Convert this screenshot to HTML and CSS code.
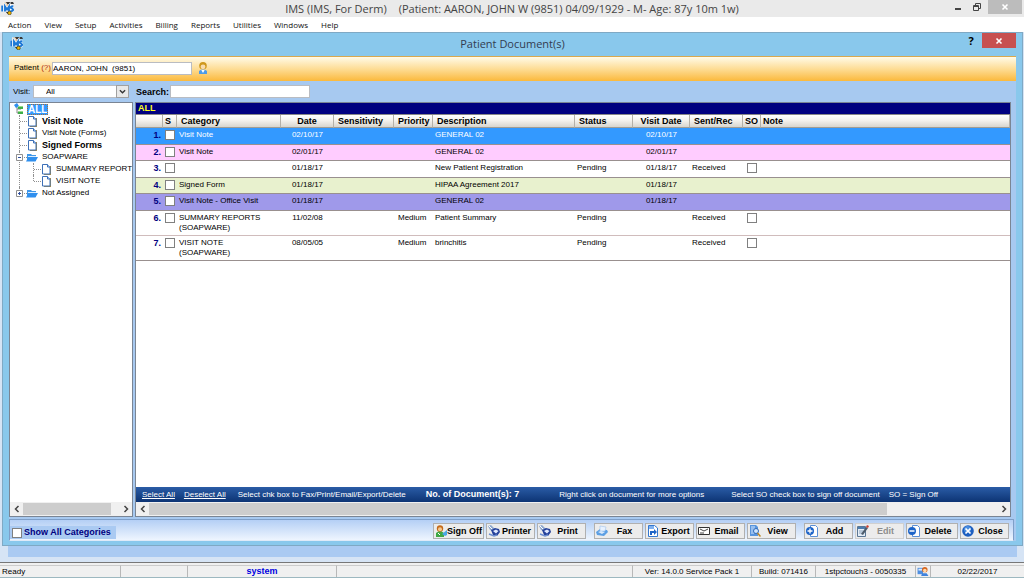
FILE: index.html
```html
<!DOCTYPE html>
<html lang="en">
<head>
<meta charset="utf-8">
<title>IMS - Patient Document(s)</title>
<link rel="stylesheet" href="styles.css">
</head>
<body>
<svg class="defs" aria-hidden="true">
  <symbol id="i-ims" viewBox="0 0 13 13">
    <path d="M2 1l4-1 2 3-4 2z" fill="#d9b48c"/><path d="M5 0h7l1 2H6z" fill="#3a3a3a"/>
    <circle cx="4" cy="2.500" r="2" fill="#ecdcc8"/>
    <path d="M1.200 3.500v6M4 9.500V4.500l2 3 2-3v5M12.300 4.500c-3-1-3 1.500-1.200 2.200s1.200 2.800-1.800 2.300" fill="none" stroke="#fff" stroke-width="3"/>
    <path d="M1.200 3.500v6M4 9.500V4.500l2 3 2-3v5M12.300 4.500c-3-1-3 1.500-1.200 2.200s1.200 2.800-1.800 2.300" fill="none" stroke="#1d78d6" stroke-width="1.900"/>
    <path d="M5.500 10l2 1.500" stroke="#222" stroke-width="1.200"/><circle cx="8.500" cy="11" r="1.800" fill="#f2b600" stroke="#332a00" stroke-width=".6"/>
  </symbol>
  <symbol id="i-page" viewBox="0 0 9 11">
    <path d="M2 2h7v9H2z" fill="#a08a50"/><path d="M.5.500h5l2.500 2.500v7H.5z" fill="#fff" stroke="#3d70b8"/><path d="M5.500.500V3H8" fill="#cfe2fa" stroke="#3d70b8"/>
  </symbol>
  <symbol id="i-folder" viewBox="0 0 12 9">
    <path d="M1 1h4l1 1h4v6H1z" fill="#3f97e8"/><path d="M0 8.500L2.500 4H12L9.500 8.500z" fill="#2f8fee"/><path d="M2 3.500h8" stroke="#d8ecff"/>
  </symbol>
  <symbol id="i-root" viewBox="0 0 10 12">
    <path d="M3 4v6h4M3 6h4" fill="none" stroke="#888"/><path d="M0 2l3-2 2 3-3 2z" fill="#2f8fee"/><path d="M4 3h5v3H4zM4 8h5v3H4z" fill="#3fae49"/><path d="M4 3h5v1H4zM4 8h5v1H4z" fill="#97dc8d"/>
  </symbol>
  <symbol id="i-person" viewBox="0 0 10 12">
    <path d="M1 12V9l3-2h2l3 2v3z" fill="#4d9be8"/><path d="M3 7.500h4L5 11z" fill="#fff"/><circle cx="5" cy="3.800" r="3.800" fill="#cf981c"/><circle cx="5" cy="4.800" r="2.400" fill="#f8dcae"/>
  </symbol>
  <symbol id="i-sign" viewBox="0 0 12 12">
    <path d="M1 12V8l3-2h2l3 2v4z" fill="#3fa845"/><circle cx="5" cy="3.500" r="3.200" fill="#c56a1a"/><circle cx="5" cy="4.300" r="2" fill="#f5c88e"/><path d="M7 9l5-4v5l-2 1z" fill="#48a7e6"/><path d="M3 8l2 2" stroke="#fff"/>
  </symbol>
  <symbol id="i-printer" viewBox="0 0 12 12">
    <path d="M0 1l3-1 4 4-2 2-3-1z" fill="#8fa9cf"/><path d="M1 1l4 4" stroke="#fff"/><path d="M3 5l4-2 4 1 1 3-3 4-4-1z" fill="#24409a"/><path d="M5 6l3-1.500L10.500 6 8 8.500z" fill="#dfe8ff"/><path d="M1 9l5 2 3-1" fill="none" stroke="#6d8ed0" stroke-width="1.500"/>
  </symbol>
  <symbol id="i-fax" viewBox="0 0 12 12">
    <path d="M0 7l4-3 7 1 1 2-4 4-7-1z" fill="#5b9fe4"/><path d="M4 1l6 1-1 4-5 0z" fill="#e8f2ff" stroke="#9fc2ec" stroke-width=".6"/><path d="M2 7l3-1 4 1-3 2z" fill="#d7e8fb"/>
  </symbol>
  <symbol id="i-export" viewBox="0 0 12 12">
    <path d="M1.500.500h6L10.500 3v8.500h-9z" fill="#fff" stroke="#3478d0"/><path d="M2 1h5v3H2z" fill="#80b1ef"/><path d="M3 10V6h4V4l3 3-3 3V8H5v2z" fill="#1f65c7"/>
  </symbol>
  <symbol id="i-mail" viewBox="0 0 12 12">
    <path d="M.5 2.500h11v7H.5z" fill="#fff" stroke="#333"/><path d="M2 4l4 2 4-2M2 8h4" fill="none" stroke="#444"/>
  </symbol>
  <symbol id="i-view" viewBox="0 0 12 12">
    <path d="M1 0h6l2 2v9H1z" fill="#5795de"/><path d="M2 2h4M2 4h5M2 6h3M2 8h3" stroke="#d9e9ff"/><circle cx="7" cy="6" r="2.500" fill="#cfe6ff" stroke="#2f68b5"/><path d="M8.500 8l3 3.500" stroke="#b98525" stroke-width="1.500"/>
  </symbol>
  <symbol id="i-add" viewBox="0 0 12 12">
    <path d="M4.500.500h5l2 2v9h-7z" fill="#fff" stroke="#5b8fd6"/><circle cx="4" cy="6" r="4" fill="#1d64c8"/><path d="M4 3.500v5M1.500 6h5" stroke="#fff" stroke-width="1.300"/>
  </symbol>
  <symbol id="i-delete" viewBox="0 0 12 12">
    <path d="M4.500.500h5l2 2v9h-7z" fill="#fff" stroke="#5b8fd6"/><circle cx="4" cy="6" r="4" fill="#1d64c8"/><path d="M1.500 6h5" stroke="#fff" stroke-width="1.500"/>
  </symbol>
  <symbol id="i-edit" viewBox="0 0 12 12">
    <path d="M.5 1.500h8v10h-8z" fill="#e5eef8" stroke="#5a7795"/><path d="M1 2h7v2H1z" fill="#4e7dae"/><path d="M2 6h4M2 8h3" stroke="#8aa2ba"/><path d="M4 9l5-7 2 1-5 7z" fill="#4d5c6b"/><path d="M9 2l1-2 2 1-1 2z" fill="#d04030"/>
  </symbol>
  <symbol id="i-close" viewBox="0 0 12 12">
    <circle cx="6" cy="6" r="5.800" fill="#1e5fc0"/><circle cx="5.500" cy="4.500" r="3.500" fill="#4b8ee0"/><path d="M3.500 3.500l5 5M8.500 3.500l-5 5" stroke="#fff" stroke-width="1.700"/>
  </symbol>
  <symbol id="i-users" viewBox="0 0 12 11">
    <path d="M0 2h6v7H0z" fill="#4f8fe0"/><path d="M1 3h4v2H1z" fill="#dcebff"/><circle cx="8" cy="4" r="3" fill="#d8641c"/><circle cx="8" cy="5" r="2" fill="#ffd9a8"/><path d="M4 11l1-3h5l2 3z" fill="#3f83dc"/>
  </symbol>
  <symbol id="i-x" viewBox="0 0 8 8"><path d="M1.500 1.500l5 5M6.500 1.500l-5 5" stroke="currentColor" stroke-width="1.600"/></symbol>
  <symbol id="i-left" viewBox="0 0 8 8"><path d="M5.500 1l-3 3 3 3" fill="none" stroke="currentColor" stroke-width="1.500"/></symbol>
  <symbol id="i-right" viewBox="0 0 8 8"><path d="M2.500 1l3 3-3 3" fill="none" stroke="currentColor" stroke-width="1.500"/></symbol>
  <symbol id="i-down" viewBox="0 0 8 8"><path d="M1 2.500l3 3 3-3" fill="none" stroke="currentColor" stroke-width="1.500"/></symbol>
</svg>

<header class="titlebar">
  <svg class="app-icon"><use href="#i-ims"/></svg>
  <h1 class="app-title"><span>IMS (IMS, For Derm)</span><span>(Patient: AARON, JOHN W (9851) 04/09/1929 - M- Age: 87y 10m 1w)</span></h1>
  <div class="win-controls">
    <button class="win-btn" aria-label="Minimize"><svg viewBox="0 0 8 8"><path d="M1 6h6" stroke="#333" stroke-width="1.800"/></svg></button>
    <button class="win-btn" aria-label="Restore"><svg viewBox="0 0 8 8"><path d="M.5 2.500h5v5h-5zM2.500 2V.500h5v5H6M.5 3.500h5" fill="none" stroke="#444"/></svg></button>
    <button class="win-btn win-close" aria-label="Close window"><svg><use href="#i-x"/></svg></button>
  </div>
</header>
<nav class="menubar">
  <button>Action</button><button>View</button><button>Setup</button><button>Activities</button><button>Billing</button><button>Reports</button><button>Utilities</button><button>Windows</button><button>Help</button>
</nav>

<main class="workspace">
  <section class="dialog">
    <header class="dialog-title">
      <svg class="app-icon"><use href="#i-ims"/></svg>
      <h2>Patient Document(s)</h2>
      <div class="dialog-controls">
        <button class="help-btn" aria-label="Help">?</button>
        <button class="close-btn" aria-label="Close dialog"><svg><use href="#i-x"/></svg></button>
      </div>
    </header>
    <div class="dialog-body">
      <div class="patient-bar">
        <label for="patient">Patient <span class="hint">(?)</span></label>
        <input id="patient" class="field" type="text" value="AARON, JOHN  (9851)">
        <svg class="person"><use href="#i-person"/></svg>
      </div>
      <div class="filter-bar">
        <label class="visit-label" for="visit">Visit:</label>
        <div class="select-wrap">
          <select id="visit"><option>All</option></select>
          <svg class="select-arrow"><use href="#i-down"/></svg>
        </div>
        <label class="bold" for="search">Search:</label>
        <input id="search" class="field search" type="text">
      </div>
      <div class="panes">
        <aside class="tree-pane">
          <div class="tree">
            <div class="node root"><svg class="root-icon"><use href="#i-root"/></svg><span class="selected">ALL</span></div>
            <ul class="branch">
              <li><div class="node bold"><svg class="page"><use href="#i-page"/></svg>Visit Note</div></li>
              <li><div class="node"><svg class="page"><use href="#i-page"/></svg>Visit Note (Forms)</div></li>
              <li><div class="node bold"><svg class="page"><use href="#i-page"/></svg>Signed Forms</div></li>
              <li><button class="toggle" aria-label="Collapse SOAPWARE"><svg viewBox="0 0 7 7"><path d="M.5.500h6v6h-6z" fill="#fff" stroke="#909090"/><path d="M2 3.500h3" stroke="#3050a0"/></svg></button>
                <div class="node"><svg class="folder"><use href="#i-folder"/></svg>SOAPWARE</div>
                <ul class="branch sub">
                  <li><div class="node"><svg class="page"><use href="#i-page"/></svg>SUMMARY REPORT</div></li>
                  <li><div class="node"><svg class="page"><use href="#i-page"/></svg>VISIT NOTE</div></li>
                </ul>
              </li>
              <li><button class="toggle" aria-label="Expand Not Assigned"><svg viewBox="0 0 7 7"><path d="M.5.500h6v6h-6z" fill="#fff" stroke="#909090"/><path d="M2 3.500h3M3.500 2v3" stroke="#3050a0"/></svg></button>
                <div class="node"><svg class="folder"><use href="#i-folder"/></svg>Not Assigned</div></li>
            </ul>
          </div>
          <div class="scrollbar">
            <button aria-label="Scroll left"><svg><use href="#i-left"/></svg></button>
            <div class="track"><div class="thumb tree-thumb"></div></div>
            <button aria-label="Scroll right"><svg><use href="#i-right"/></svg></button>
          </div>
        </aside>
        <section class="list-pane">
          <h3 class="list-title">ALL</h3>
          <div class="table-area">
            <table>
              <colgroup><col class="c-num"><col class="c-s"><col class="c-cat"><col class="c-date"><col class="c-sens"><col class="c-prio"><col class="c-desc"><col class="c-status"><col class="c-visit"><col class="c-sent"><col class="c-so"><col></colgroup>
              <thead><tr><th></th><th class="tight">S</th><th>Category</th><th class="center">Date</th><th>Sensitivity</th><th>Priority</th><th>Description</th><th>Status</th><th class="center">Visit Date</th><th>Sent/Rec</th><th class="tight">SO</th><th class="tight">Note</th></tr></thead>
              <tbody>
                <tr class="blue"><td class="num">1.</td><td class="box"><input type="checkbox" aria-label="Select 1"></td><td>Visit Note</td><td class="center">02/10/17</td><td></td><td></td><td>GENERAL 02</td><td></td><td class="center">02/10/17</td><td></td><td></td><td></td></tr>
                <tr class="pink"><td class="num">2.</td><td class="box"><input type="checkbox" aria-label="Select 2"></td><td>Visit Note</td><td class="center">02/01/17</td><td></td><td></td><td>GENERAL 02</td><td></td><td class="center">02/01/17</td><td></td><td></td><td></td></tr>
                <tr><td class="num">3.</td><td class="box"><input type="checkbox" aria-label="Select 3"></td><td></td><td class="center">01/18/17</td><td></td><td></td><td>New Patient Registration</td><td>Pending</td><td class="center">01/18/17</td><td>Received</td><td class="box"><input type="checkbox" aria-label="Sign off 3"></td><td></td></tr>
                <tr class="green"><td class="num">4.</td><td class="box"><input type="checkbox" aria-label="Select 4"></td><td>Signed Form</td><td class="center">01/18/17</td><td></td><td></td><td>HIPAA Agreement 2017</td><td></td><td class="center">01/18/17</td><td></td><td></td><td></td></tr>
                <tr class="purple"><td class="num">5.</td><td class="box"><input type="checkbox" aria-label="Select 5"></td><td>Visit Note - Office Visit</td><td class="center">01/18/17</td><td></td><td></td><td>GENERAL 02</td><td></td><td class="center">01/18/17</td><td></td><td></td><td></td></tr>
                <tr class="tall"><td class="num">6.</td><td class="box"><input type="checkbox" aria-label="Select 6"></td><td>SUMMARY REPORTS<br>(SOAPWARE)</td><td class="center">11/02/08</td><td></td><td class="prio">Medium</td><td>Patient Summary</td><td>Pending</td><td></td><td>Received</td><td class="box"><input type="checkbox" aria-label="Sign off 6"></td><td></td></tr>
                <tr class="tall"><td class="num">7.</td><td class="box"><input type="checkbox" aria-label="Select 7"></td><td>VISIT NOTE<br>(SOAPWARE)</td><td class="center">08/05/05</td><td></td><td class="prio">Medium</td><td>brinchitis</td><td>Pending</td><td></td><td>Received</td><td class="box"><input type="checkbox" aria-label="Sign off 7"></td><td></td></tr>
              </tbody>
            </table>
          </div>
          <footer class="list-footer">
            <a href="#">Select All</a><a class="deselect" href="#">Deselect All</a>
            <span class="chk">Select chk box to Fax/Print/Email/Export/Delete</span>
            <b class="count">No. of Document(s): 7</b>
            <span class="more">Right click on document for more options</span>
            <span class="so">Select SO check box to sign off document</span><span>SO = Sign Off</span>
          </footer>
          <div class="scrollbar">
            <button aria-label="Scroll left"><svg><use href="#i-left"/></svg></button>
            <div class="track"><div class="thumb list-thumb"></div></div>
            <button aria-label="Scroll right"><svg><use href="#i-right"/></svg></button>
          </div>
        </section>
      </div>
      <footer class="actions">
        <label class="show-all"><input type="checkbox">Show All Categories</label>
        <div class="group">
          <button><svg><use href="#i-sign"/></svg><span>Sign Off</span></button>
          <button><svg><use href="#i-printer"/></svg><span>Printer</span></button>
          <button><svg><use href="#i-printer"/></svg><span>Print</span></button>
        </div>
        <div class="group">
          <button><svg><use href="#i-fax"/></svg><span>Fax</span></button>
          <button><svg><use href="#i-export"/></svg><span>Export</span></button>
          <button><svg><use href="#i-mail"/></svg><span>Email</span></button>
          <button><svg><use href="#i-view"/></svg><span>View</span></button>
        </div>
        <div class="group">
          <button><svg><use href="#i-add"/></svg><span>Add</span></button>
          <button disabled><svg><use href="#i-edit"/></svg><span>Edit</span></button>
          <button class="wide"><svg><use href="#i-delete"/></svg><span>Delete</span></button>
          <button><svg><use href="#i-close"/></svg><span>Close</span></button>
        </div>
      </footer>
    </div>
  </section>
  <div class="backdrop"></div>
</main>

<footer class="statusbar">
  <span class="s-ready">Ready</span><span class="s-blank"></span><span class="s-user">system</span><span class="s-fill"></span>
  <span class="s-ver">Ver: 14.0.0 Service Pack 1</span><span class="s-build">Build: 071416</span><span class="s-host">1stpctouch3 - 0050335</span>
  <span class="s-icon"><svg><use href="#i-users"/></svg></span><span class="s-date">02/22/2017</span>
</footer>
</body>
</html>
```
FILE: styles.css
```css
* { box-sizing: border-box; }

body {
  margin: 0;
  height: 100vh;
  display: flex;
  flex-direction: column;
  overflow: hidden;
  background: #f4f4f4;
  color: #000;
  font: 8px/12px "Liberation Sans", sans-serif;
}

button, input, select { font: inherit; color: inherit; margin: 0; }
button { padding: 0; border: 0; background: none; }
h1, h2, h3 { margin: 0; font-weight: normal; }
ul { list-style: none; margin: 0; padding: 0; }
svg { display: block; flex: none; }
.defs { position: absolute; width: 0; height: 0; }
.bold { font: bold 9px/12px "Liberation Sans", sans-serif; }

input[type="checkbox"] {
  appearance: none;
  display: block;
  flex: none;
  width: 10px;
  height: 10px;
  border: 1px solid #808080;
  background: #fff;
}

/* Application frame */
.titlebar {
  display: grid;
  grid-template-columns: 1fr auto 1fr;
  height: 17px;
  background: #eaeaea;
}
.app-icon { width: 13px; height: 13px; margin: 2px 0 0 1px; }
.app-title {
  display: flex;
  gap: 12px;
  font: 11px/17px "Open Sans", sans-serif;
  color: #444;
}
.win-controls { display: flex; justify-content: flex-end; align-items: flex-start; margin-right: 2px; }
.win-btn { display: flex; align-items: center; justify-content: center; width: 19px; height: 14px; }
.win-btn svg { width: 8px; height: 8px; }
.win-close { width: 34px; margin-left: 2px; background: #bcbcbc; color: #fff; }

.menubar { display: flex; gap: 13px; height: 15px; padding-left: 8px; background: #fff; }
.menubar button { font: 8px/14px "Open Sans", sans-serif; color: #111; }

.workspace {
  flex: 1;
  display: flex;
  flex-direction: column;
  min-height: 0;
  padding: 0 1px 0 2px;
  background: #d6e4f5;
  border-bottom: 1px solid #777;
}
.backdrop { flex: none; height: 11px; margin: 0 6px 5px; background: #aacaf2; }

/* Dialog */
.dialog {
  flex: 1;
  display: flex;
  flex-direction: column;
  min-height: 0;
  padding: 0 6px 4px;
  border: 1px solid #7fa9c4;
  background: #89c8ec;
}
.dialog-title { display: grid; grid-template-columns: 1fr auto 1fr; height: 23px; }
.dialog-title .app-icon { margin-top: 4px; }
.dialog-title h2 { font: 11px/22px "Open Sans", sans-serif; color: #333c50; }
.dialog-controls { display: flex; justify-content: flex-end; align-items: flex-start; gap: 6px; }
.help-btn { width: 10px; font: bold 11px/16px "Open Sans", sans-serif; }
.close-btn { display: flex; align-items: center; justify-content: center; width: 34px; height: 15px; background: #c75050; color: #fff; }
.close-btn svg { width: 8px; height: 8px; }
.dialog-body { flex: 1; display: flex; flex-direction: column; min-height: 0; background: #a7c9f0; }

.patient-bar {
  display: flex;
  align-items: center;
  height: 25px;
  padding: 0 0 2px 5px;
  border-top: 1px solid #d9a94e;
  background: linear-gradient(#fffbe8, #fdd98c 55%, #fbb93c);
}
.patient-bar label { min-width: 38px; }
.hint { color: #b03010; }
.patient-bar .field { width: 140px; }
.field { height: 13px; padding: 0; border: 1px solid #b9bcc2; background: #fff; white-space: pre; }
.person { width: 10px; height: 12px; margin-left: 6px; }

.filter-bar { display: flex; align-items: center; height: 21px; padding-left: 4px; }
.visit-label { min-width: 20px; }
.select-wrap { position: relative; width: 96px; margin-right: 7px; }
.select-wrap select { appearance: none; display: block; width: 100%; height: 13px; padding: 0 12px; border: 1px solid #b9bcc2; border-radius: 0; background: #fff; }
.select-arrow { position: absolute; right: 0; top: 0; width: 13px; height: 13px; padding: 2px; border: 1px solid #a0a0a0; background: #e8e8e8; color: #333; pointer-events: none; }
.search { width: 140px; margin-left: 1px; }

.panes { flex: 1; display: flex; gap: 2px; min-height: 0; padding-right: 5px; }
.tree-pane, .list-pane { display: flex; flex-direction: column; border: 1px solid #7a8594; background: #fff; }
.tree-pane { flex: none; width: 124px; }
.list-pane { flex: 1; min-width: 0; }

/* Category tree */
.tree { flex: 1; overflow: hidden; white-space: nowrap; }
.node { display: flex; align-items: center; height: 12px; gap: 5px; }
.root { gap: 3px; padding-left: 4px; }
.root-icon { width: 10px; height: 12px; }
.selected { padding: 0 1px; background: #3399ff; color: #fff; font: bold 10px/11px "Liberation Sans", sans-serif; outline: 1px dotted #a07040; outline-offset: -1px; }
.branch { padding-left: 9px; }
.branch li { position: relative; padding-left: 8px; border-left: 1px dotted #909090; }
.branch li:last-child { border-left-color: transparent; }
.branch li::before { content: ""; position: absolute; left: 0; top: 6px; width: 7px; border-top: 1px dotted #909090; }
.branch li:last-child::after { content: ""; position: absolute; left: -1px; top: 0; height: 6px; border-left: 1px dotted #909090; }
.sub { padding-left: 5px; }
.page { width: 9px; height: 11px; }
.folder { width: 12px; height: 9px; margin: 0 -1px 0 -2px; }
.toggle { position: absolute; z-index: 1; left: -4px; top: 3px; width: 7px; height: 7px; }
.toggle svg { width: 7px; height: 7px; }

.scrollbar { flex: none; display: flex; height: 14px; background: #f0f0f0; color: #444; }
.scrollbar button { display: flex; align-items: center; justify-content: center; width: 13px; }
.scrollbar svg { width: 8px; height: 8px; }
.track { flex: 1; display: flex; padding: 1px 0; }
.thumb { background: #cdcdcd; }
.tree-thumb { width: 92%; }
.list-thumb { width: 87%; }

/* Document list */
.list-title { flex: none; padding-left: 2px; background: #000080; color: #ffff20; font: bold 9px/11px "Liberation Sans", sans-serif; }
.table-area { flex: 1; min-height: 0; overflow: hidden; border-top: 1px solid #888; }
table { width: 100%; table-layout: fixed; border-collapse: separate; border-spacing: 0; }
.c-num { width: 27px; } .c-s { width: 14px; } .c-cat { width: 104px; } .c-date { width: 53px; }
.c-sens { width: 60px; } .c-prio { width: 39px; } .c-desc { width: 142px; } .c-status { width: 58px; }
.c-visit { width: 57px; } .c-sent { width: 53px; } .c-so { width: 18px; }
th {
  height: 13px;
  padding: 0 4px;
  text-align: left;
  white-space: nowrap;
  font: bold 9px/12px "Liberation Sans", sans-serif;
  border-right: 1px solid #b4b0a8;
  border-bottom: 1px solid #a09c94;
  background: linear-gradient(#fff, #f4f2ee 45%, #d8d5ce);
}
th.tight { padding: 0 1px 0 2px; }
td { height: 17px; padding: 2px 2px 0; vertical-align: top; line-height: 10px; border-bottom: 1px solid #99908f; white-space: nowrap; }
tr:nth-child(even) td { height: 16px; }
tr.tall td { height: 25px; }
tr.tall:nth-child(6) td { border-bottom-color: #d0bcbc; }
th.center, td.center { text-align: center; }
td.prio { padding-left: 4px; }
td.num { text-align: right; color: #000080; font: bold 9px/10px "Liberation Sans", sans-serif; }
td.box { padding: 2px 0 0 4px; }
td.box:nth-child(2) { padding-left: 2px; }
.blue { background: #3399ff; color: #fff; }
.pink { background: #ffccff; }
.green { background: #e8f1ce; }
.purple { background: #9f99ea; }

.list-footer {
  flex: none;
  display: flex;
  height: 15px;
  padding-left: 6px;
  line-height: 15px;
  white-space: nowrap;
  color: #fff;
  background: linear-gradient(#2a5ca6, #0d3474);
}
.list-footer a { color: inherit; }
.list-footer .deselect { margin-left: 9px; }
.list-footer .chk { margin-left: 12px; }
.count { margin-left: 20px; font: bold 9px/15px "Liberation Sans", sans-serif; }
.list-footer .more { margin-left: 40px; }
.list-footer .so { margin: 0 9px 0 27px; }

/* Action bar */
.actions {
  flex: none;
  display: flex;
  align-items: flex-end;
  gap: 8px;
  height: 22px;
  margin: 2px 2px 0 0;
  padding: 0 4px 1px 0;
  border: 1px solid #7f9fc8;
  border-bottom-color: #dfeaf8;
  background: linear-gradient(#b4cff5, #eef5fe);
}
.show-all { display: flex; align-items: center; gap: 2px; height: 13px; padding: 0 5px 0 2px; margin-right: auto; background: #aacaf2; color: #000080; font: bold 9px/13px "Liberation Sans", sans-serif; }
.group { display: flex; gap: 2px; }
.group button {
  display: flex;
  align-items: center;
  min-width: 49px;
  height: 16px;
  padding: 0 1px;
  border: 1px solid #b0b0b0;
  background: #ececec;
  font: bold 9px/14px "Liberation Sans", sans-serif;
}
.group .wide { min-width: 52px; }
.group svg { width: 12px; height: 12px; }
.group span { flex: 1; text-align: center; white-space: nowrap; }
.group button:disabled { color: #8c8c8c; border-color: #d0d0d0; }

.statusbar { flex: none; display: flex; height: 15px; padding-top: 2px; border-bottom: 1px solid #9db8c0; background: #f0f0f0; white-space: nowrap; }
.statusbar span { padding: 0 2px; border-right: 1px solid #b8b8b8; border-top: 1px solid #ccc; text-align: center; line-height: 11px; }
.statusbar .s-ready { width: 121px; text-align: left; }
.s-blank { width: 67px; }
.statusbar .s-user { width: 149px; color: #0000e0; font: bold 9px/11px "Liberation Sans", sans-serif; }
.s-fill { flex: 1; }
.s-ver { width: 119px; }
.s-build { width: 64px; }
.s-host { width: 100px; }
.statusbar .s-icon { width: 15px; padding: 0 1px; }
.s-icon svg { width: 12px; height: 10px; }
.statusbar .s-date { width: 93px; border-right: 0; }
```
